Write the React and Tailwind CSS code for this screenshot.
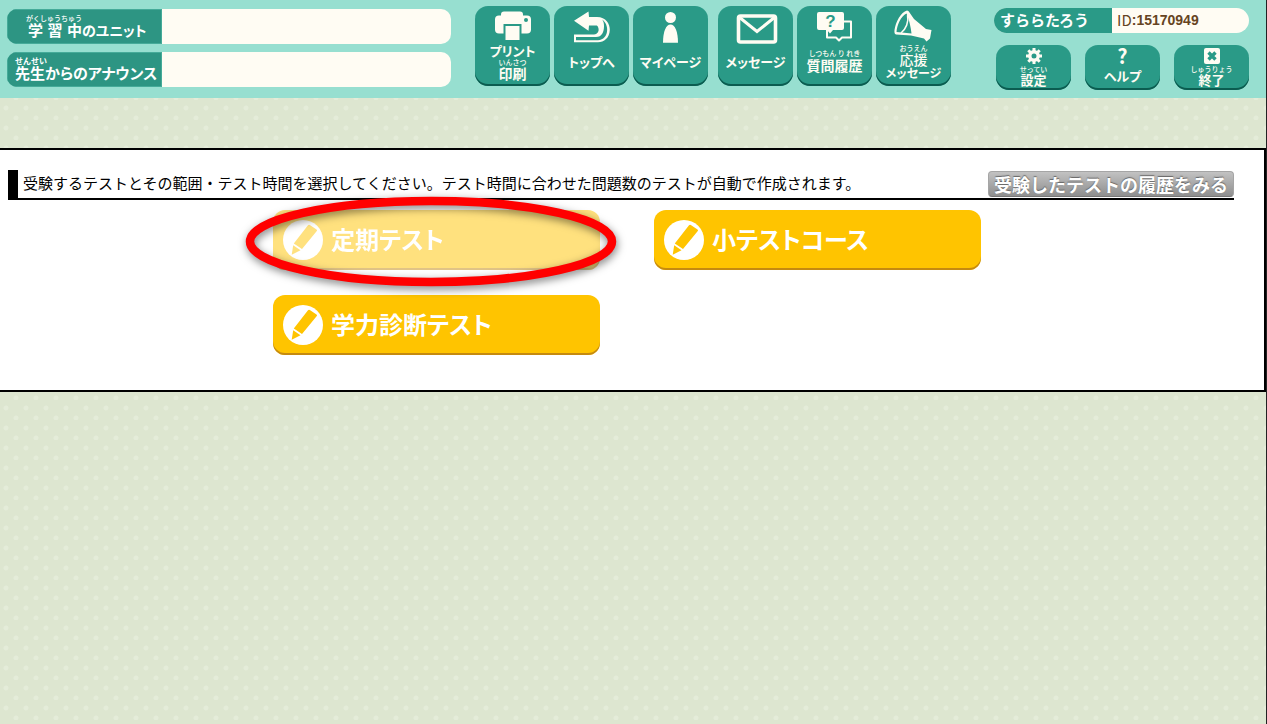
import React from 'react';

const navIcon = 'block h-[34px] w-full shrink-0 overflow-visible';

const PrinterIcon = () => (
  <svg viewBox="0 0 75 34" className={navIcon} aria-hidden="true">
    <rect x="26" y="1.5" width="22" height="12" rx="3" fill="#fffcf3" />
    <rect x="20" y="5.5" width="36" height="18" rx="4" fill="#fffcf3" />
    <circle cx="51" cy="10" r="2" fill="#2a9a87" />
    <path d="M28.5 24.5V14h18v10.5" fill="#2a9a87" />
    <rect x="30.5" y="16" width="14" height="14" fill="#fffcf3" />
  </svg>
);

const BackIcon = () => (
  <svg viewBox="0 0 75 34" className={navIcon} aria-hidden="true">
    <path
      d="M20 10.7L34.5 1.5L35 7H43C52 7 56 14 55.8 20C55.5 28 50 32.2 44 32.2H20V24.5H40C44 24 45 21 44.5 18.5C44 16 43 15.5 42 15.5H35L34.5 20.7Z"
      fill="#fffcf3"
    />
    <path
      d="M48 9.5C55.500 14 55.500 29.500 44 30.300H22V27H42C48 27 50 22 50 16C50 13 49.500 11 48 9.500Z"
      fill="#2a9a87"
    />
  </svg>
);

const PersonIcon = () => (
  <svg viewBox="0 0 75 34" className={navIcon} aria-hidden="true">
    <circle cx="37.5" cy="7.5" r="5.5" fill="#fffcf3" />
    <path d="M37.5 14.5c4.5 0 7.5 7 7.5 18.3H30c0-11.3 3-18.3 7.5-18.3z" fill="#fffcf3" />
  </svg>
);

const MailIcon = () => (
  <svg viewBox="0 0 75 34" className={navIcon} aria-hidden="true">
    <rect x="20.5" y="6" width="37" height="26" rx="2" fill="none" stroke="#fffcf3" strokeWidth="3.6" />
    <path d="M21 7l18 14.5L57 7" fill="none" stroke="#fffcf3" strokeWidth="3" />
  </svg>
);

const QuestionsIcon = () => (
  <svg viewBox="0 0 75 34" className={navIcon} aria-hidden="true">
    <path
      d="M30 11.5h24v16H45l-3 3-3-3h-9z"
      fill="none"
      stroke="#fffcf3"
      strokeWidth="2"
      strokeLinejoin="round"
    />
    <path
      d="M22 2h23q2 0 2 2v14q0 2-2 2h-9l-3 3.5L30 20h-8q-2 0-2-2V4q0-2 2-2z"
      fill="#fffcf3"
    />
    <text
      x="33.5"
      y="17"
      textAnchor="middle"
      fill="#2a9a87"
      className="font-['Liberation_Sans',Arial,sans-serif] text-[17px] font-bold"
    >
      ?
    </text>
  </svg>
);

const MegaphoneIcon = () => (
  <svg viewBox="0 0 75 34" className={navIcon} aria-hidden="true">
    <path
      d="M31 .5Q32.500 .5 33.500 2.500L38 9L50 19L55.500 20L54 28.500L50.500 31.500L48 28.500L35 25.500L20 24.500Q18 24 18.500 20C19.500 12 25 2 31 .5Z"
      fill="#fffcf3"
    />
    <path d="M30.500 3.500C25 6 21 15 20.500 22C26 22.500 31 23 35.500 23.500C35 18 33 9 30.500 3.500Z" fill="#2a9a87" />
    <path d="M31.500 5C33 12 30 19 25 23" fill="none" stroke="#fffcf3" strokeWidth="1.5" />
  </svg>
);

const GearIcon = () => (
  <svg viewBox="0 0 18 18" className="block h-[18px] w-[18px]" aria-hidden="true">
    <circle cx="9" cy="9" r="4.2" fill="none" stroke="#fffcf3" strokeWidth="3.4" />
    <path
      d="M9 1v3M9 14v3M1 9h3M14 9h3M3.3 3.3l2.2 2.2M12.5 12.5l2.2 2.2M3.3 14.7l2.2-2.2M12.5 5.5l2.2-2.2"
      stroke="#fffcf3"
      strokeWidth="3"
    />
  </svg>
);

const CloseIcon = () => (
  <svg viewBox="0 0 18 18" className="block h-[18px] w-[18px]" aria-hidden="true">
    <rect x="1" y="1" width="16" height="16" rx="2" fill="#fffcf3" />
    <path d="M5.5 5.5l7 7M12.5 5.5l-7 7" stroke="#2a9a87" strokeWidth="3.4" />
  </svg>
);

const PencilIcon = () => (
  <svg viewBox="0 0 40 40" className="h-10 w-10 shrink-0" aria-hidden="true">
    <circle cx="20" cy="20" r="20" fill="#ffffff" />
    <path d="M25 5.3q.8-1 1.800-.3l6.700 4.400q1 .7.300 1.600L19 29L10.800 23.500z" fill="#ffc400" />
    <path d="M10.200 25.200L17.500 30.300L8.700 34.800z" fill="#ffc400" />
  </svg>
);

const Furigana = ({ children }) => (
  <span className="block text-[7px] leading-[8px] font-medium [font-feature-settings:normal]">{children}</span>
);

const InfoRow = ({ id, label }) => (
  <div className="flex h-[35px] overflow-hidden rounded-[10px]">
    <label
      htmlFor={id}
      className="flex w-[155px] shrink-0 items-end bg-[#2d9583] pb-[6px] text-white shadow-[inset_0_0_0_1px_#45ab99]"
    >
      {label}
    </label>
    <input id={id} readOnly className="min-w-0 flex-1 bg-[#fffcf3] px-2 text-sm outline-none" />
  </div>
);

const NavButton = ({ icon, children }) => (
  <button
    type="button"
    className="flex h-20 w-[75px] shrink-0 flex-col rounded-[13px] bg-[#2a9a87] pt-1 text-[#fffcf3] shadow-[inset_0_-2px_0_#0b5c50]"
  >
    {icon}
    <span className="flex w-full flex-1 flex-col items-center justify-center pb-[6px] text-[13px] leading-[14px] font-bold whitespace-nowrap [font-feature-settings:'palt']">
      {children}
    </span>
  </button>
);

const SmallButton = ({ icon, children }) => (
  <button
    type="button"
    className="flex h-[45px] w-[75px] flex-col items-center rounded-[13px] bg-[#2a9a87] pt-[2px] text-[#fffcf3] shadow-[inset_0_-2px_0_#0b5c50]"
  >
    {icon}
    <span className="flex flex-1 flex-col items-center justify-start text-[13px] leading-[14px] font-bold whitespace-nowrap [font-feature-settings:'palt']">
      {children}
    </span>
  </button>
);

const TestButton = ({ label, faded }) => (
  <button
    type="button"
    className={`flex h-[60px] w-full items-center gap-2 rounded-[12px] bg-[#ffc400] px-[10px] text-2xl font-bold whitespace-nowrap text-white shadow-[inset_0_-2px_0_#c58a10] [font-feature-settings:'palt'] ${
      faded ? 'opacity-50' : ''
    }`}
  >
    <PencilIcon />
    <span className="pb-[2px]">{label}</span>
  </button>
);

const Highlight = () => (
  <svg
    viewBox="0 0 390 110"
    className="pointer-events-none absolute -top-6 -left-9 h-[110px] w-[390px] max-w-none drop-shadow-[1px_3px_4px_rgba(0,0,0,0.5)]"
    aria-hidden="true"
  >
    <ellipse cx="194" cy="55.5" rx="181" ry="40.5" fill="none" stroke="#ff0000" strokeWidth="8.5" />
  </svg>
);

const Header = () => (
  <header className="flex h-[98px] items-start bg-[#97dfd0] pr-[17px] pl-[7px]">
    <div className="flex min-w-[300px] flex-1 flex-col gap-2 pt-[9px]">
      <InfoRow
        id="unit"
        label={
          <span className="flex items-end pl-[19px] text-[15px] leading-4 font-bold whitespace-nowrap">
            <span className="flex flex-col">
              <Furigana>がくしゅうちゅう</Furigana>
              <span className="flex justify-between pl-[2px]">
                <span>学</span>
                <span>習</span>
                <span>中</span>
              </span>
            </span>
            <span className="text-[14px] [font-feature-settings:'palt']">のユニット</span>
          </span>
        }
      />
      <InfoRow
        id="announce"
        label={
          <span className="pl-2 text-[15px] leading-4 font-bold whitespace-nowrap [font-feature-settings:'palt']">
            <span className="block text-[8px] leading-[8px] [font-feature-settings:normal]">せんせい</span>
            先生からのアナウンス
          </span>
        }
      />
    </div>

    <nav className="ml-6 flex gap-[10px] pt-[6px]">
      <div className="flex gap-1">
        <NavButton icon={<PrinterIcon />}>
          <span>プリント</span>
          <Furigana>いんさつ</Furigana>
          <span className="text-[14px]">印刷</span>
        </NavButton>
        <NavButton icon={<BackIcon />}>トップへ</NavButton>
        <NavButton icon={<PersonIcon />}>マイページ</NavButton>
      </div>
      <div className="flex gap-1">
        <NavButton icon={<MailIcon />}>メッセージ</NavButton>
        <NavButton icon={<QuestionsIcon />}>
          <Furigana>しつもん り れき</Furigana>
          <span className="pt-[1px] pb-1 text-[14px]">質問履歴</span>
        </NavButton>
        <NavButton icon={<MegaphoneIcon />}>
          <Furigana>おうえん</Furigana>
          <span className="text-[14px] font-medium">応援</span>
          <span className="text-[12px]">メッセージ</span>
        </NavButton>
      </div>
    </nav>

    <div className="ml-[43px] flex w-[255px] shrink-0 flex-col items-end gap-3 pt-2">
      <div className="flex h-[25px] w-full overflow-hidden rounded-full bg-[#fffcf3]">
        <div className="flex w-[118px] items-center bg-[#2a9a87] pb-[1px] pl-[6px] text-[15px] leading-6 font-bold whitespace-nowrap text-white">
          すららたろう
        </div>
        <div className="flex items-center pb-[1px] pl-[5px] font-['Liberation_Sans',Arial,sans-serif] text-[14px] leading-6 text-[#664422]">
          <span className="font-['Noto_Sans_CJK_JP',sans-serif] text-[15px]">ID</span>
          <span className="font-bold">:15170949</span>
        </div>
      </div>
      <div className="flex gap-[14px]">
        <SmallButton icon={<GearIcon />}>
          <Furigana>せってい</Furigana>
          設定
        </SmallButton>
        <SmallButton icon={<span className="block h-[18px] text-[20px] leading-[18px] font-bold">?</span>}>
          <span className="pt-1">ヘルプ</span>
        </SmallButton>
        <SmallButton icon={<CloseIcon />}>
          <Furigana>しゅうりょう</Furigana>
          終了
        </SmallButton>
      </div>
    </div>
  </header>
);

const App = () => {
  return (
    <div
      lang="ja"
      className="min-h-screen border-r border-[#222222] bg-[#dde6d0] bg-[radial-gradient(circle_at_16px_18px,#e4ecd9_2px,transparent_3px),radial-gradient(circle_at_6px_8px,#e4ecd9_2px,transparent_3px)] bg-[length:20px_20px] font-['Noto_Sans_CJK_JP',sans-serif]"
    >
      <Header />

      <main className="mt-[50px] border-y-2 border-r-2 border-black bg-white pt-5 pb-[35px]">
        <div className="mr-[30px] ml-2 flex h-[30px] items-start justify-between border-b-2 border-l-[10px] border-black pl-[5px]">
          <h1 className="text-[15px] leading-[26px] font-normal whitespace-nowrap text-black">
            受験するテストとその範囲・テスト時間を選択してください。テスト時間に合わせた問題数のテストが自動で作成されます。
          </h1>
          <button
            type="button"
            className="mt-[1px] h-[26px] w-[246px] shrink-0 rounded-[4px] border border-[#a5a5a5] border-b-[#777777] bg-linear-to-b from-[#c2c2c2] to-[#8f8f8f] text-[18px] leading-6 font-bold whitespace-nowrap text-white [text-shadow:0_-1px_1px_#666666]"
          >
            受験したテストの履歴をみる
          </button>
        </div>

        <div className="mt-[10px] grid grid-cols-[327px_327px] justify-center gap-x-[54px] gap-y-[25px] pr-[10px]">
          <div className="relative">
            <TestButton label="定期テスト" faded />
            <Highlight />
          </div>
          <TestButton label="小テストコース" />
          <TestButton label="学力診断テスト" />
        </div>
      </main>
    </div>
  );
};

export default App;
